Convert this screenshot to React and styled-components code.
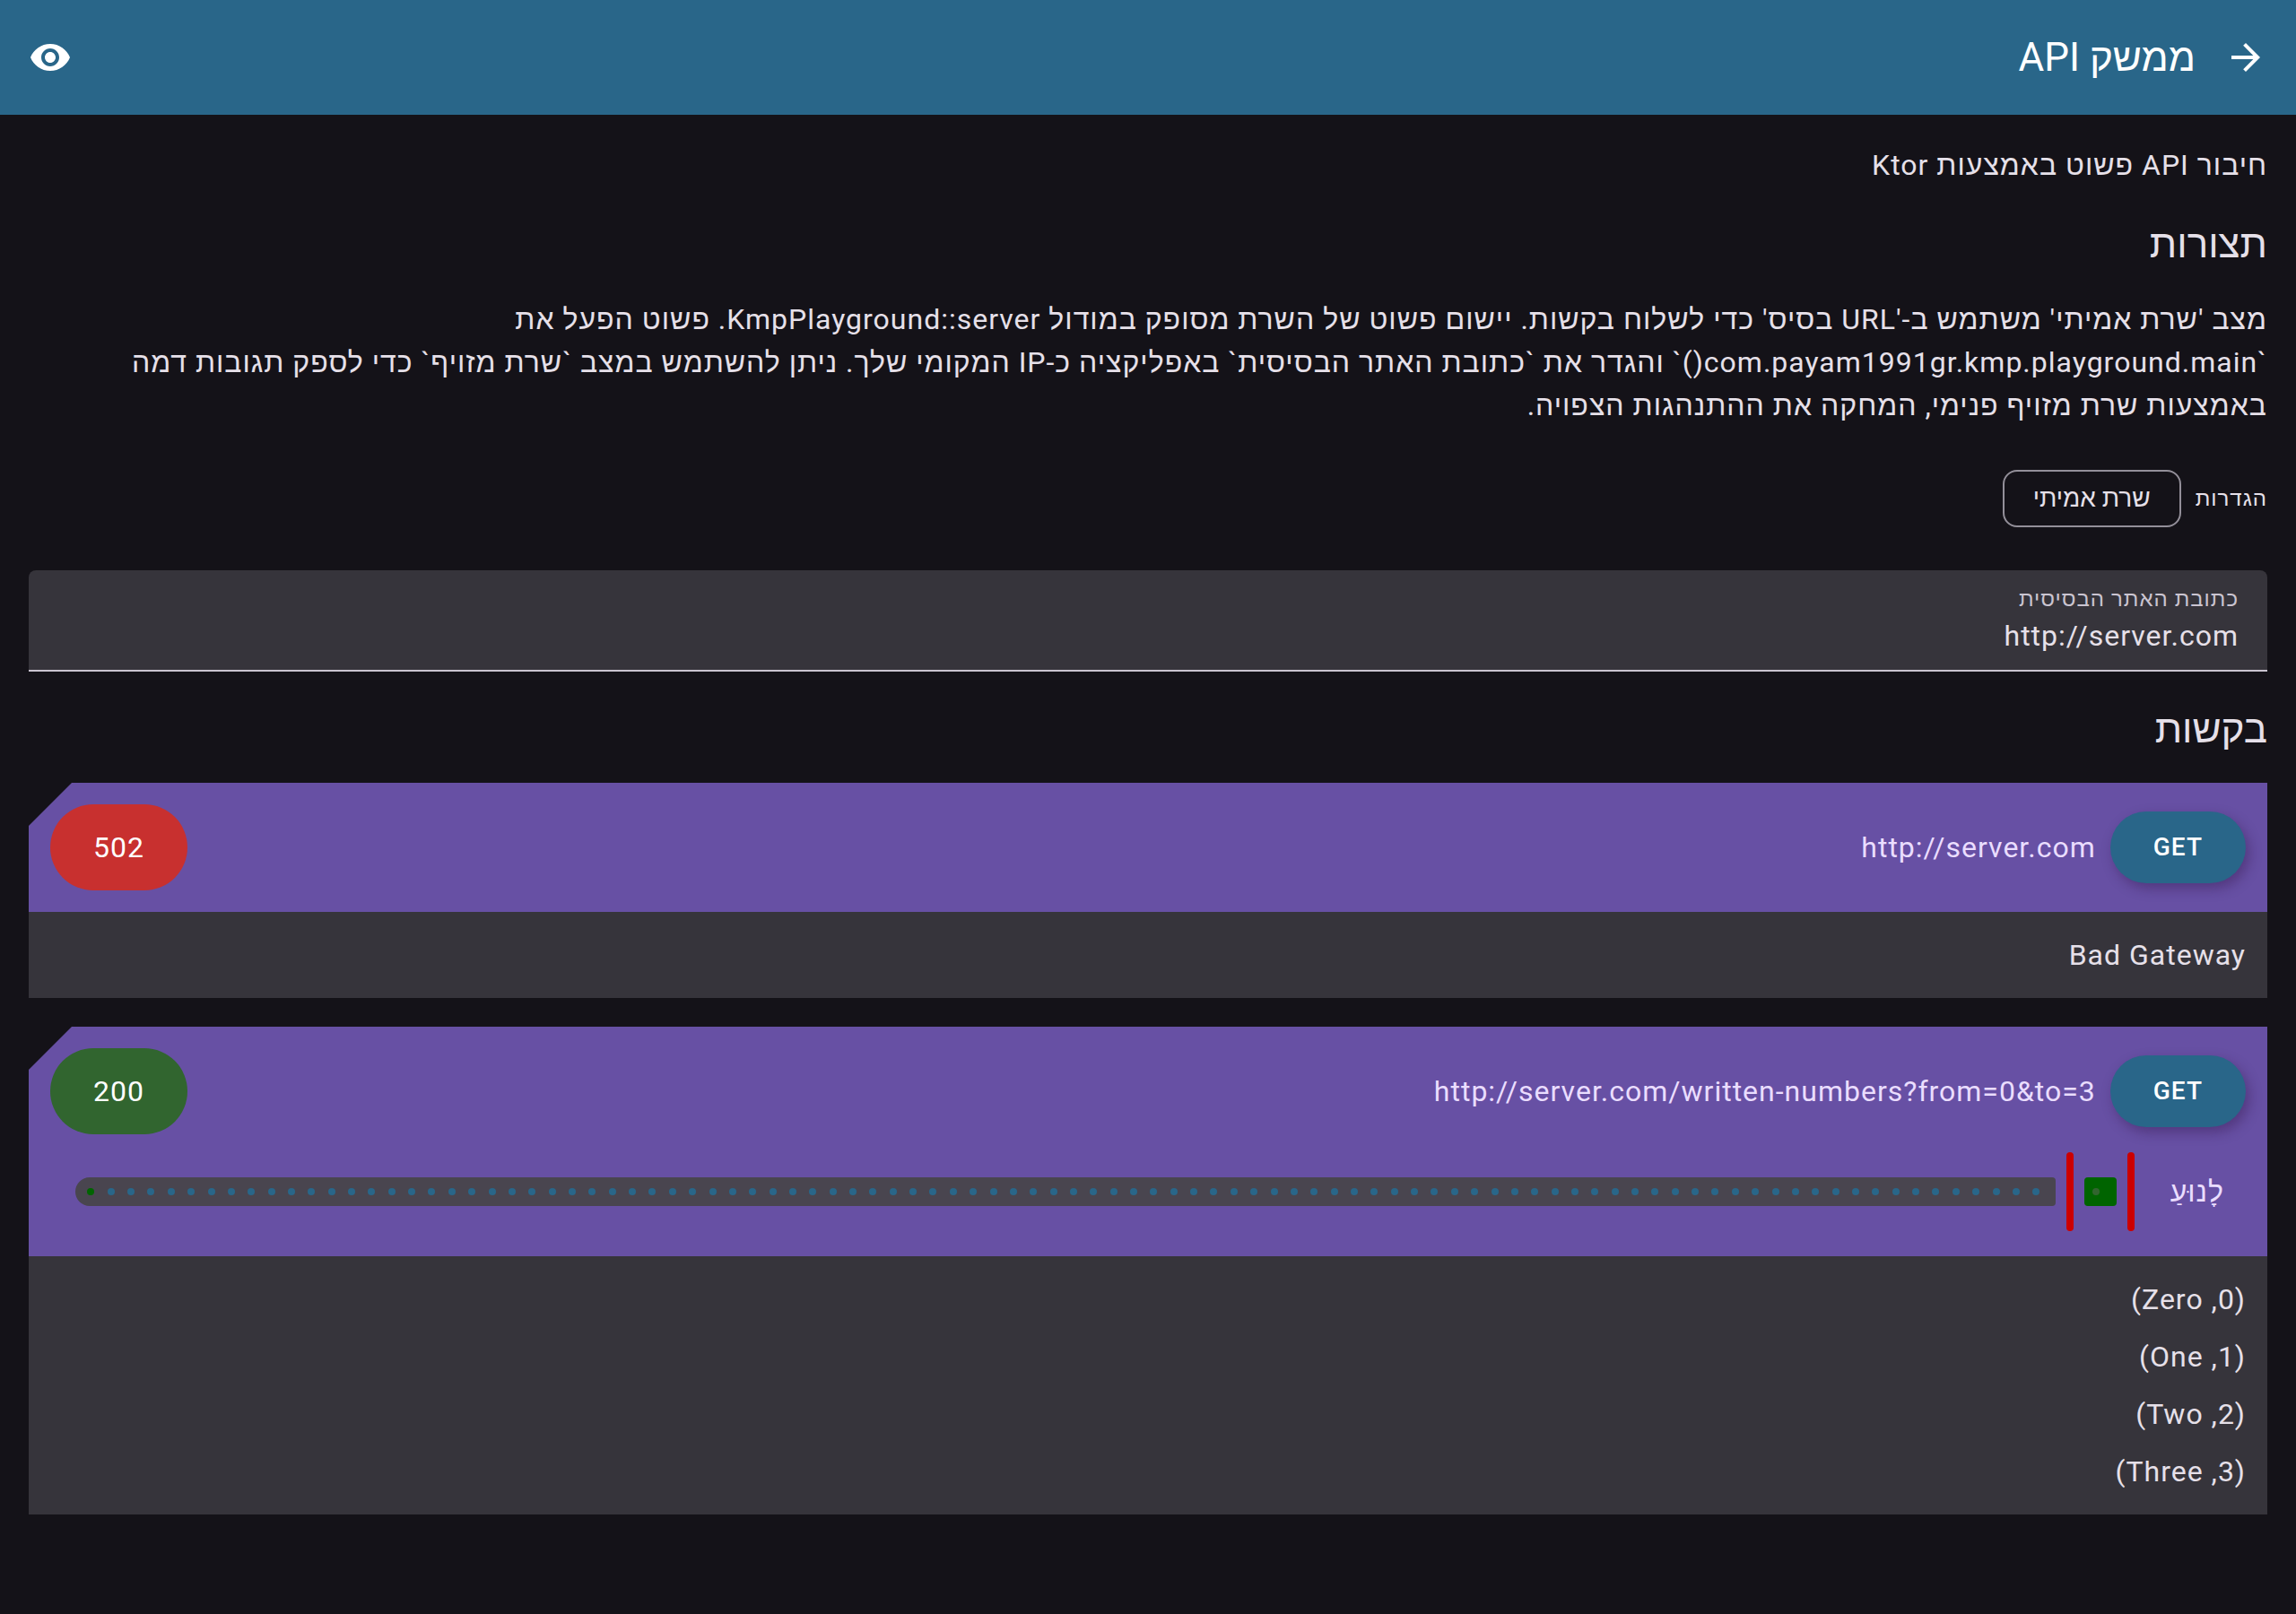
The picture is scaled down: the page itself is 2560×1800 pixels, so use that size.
import React, { useState } from "react";
import styled, { createGlobalStyle } from "styled-components";
import { MdArrowForward, MdVisibility } from "react-icons/md";

const color = {
  primary: "#296689",
  background: "#141218",
  surface: "#36343b",
  onSurface: "#e6e0e9",
  onSurfaceVariant: "#cac4d0",
  outline: "#938f99",
  header: "#6750a4",
  onHeader: "#eaddff",
  success: "#31652f",
  error: "#c8302f",
  thumb: "#cc0000",
  active: "#006400",
  track: "#49454f",
};

const GlobalStyle = createGlobalStyle`
  *, *::before, *::after { box-sizing: border-box; }
  body {
    margin: 0;
    background: ${color.background};
    color: ${color.onSurface};
    font-family: Roboto, "Liberation Sans", sans-serif;
    font-size: 32px;
    line-height: 48px;
    letter-spacing: 1px;
  }
  button, input { font-family: inherit; letter-spacing: inherit; }
`;

const Page = styled.div`
  min-height: 100vh;
`;

const TopBar = styled.header`
  display: flex;
  align-items: center;
  gap: 8px;
  height: 128px;
  padding: 0 8px;
  background: ${color.primary};
  color: #fff;
`;

const IconButton = styled.button`
  display: grid;
  place-items: center;
  width: 96px;
  height: 96px;
  padding: 0;
  border: 0;
  border-radius: 50%;
  background: none;
  color: inherit;
  svg { width: 48px; height: 48px; }
`;

const Title = styled.h1`
  flex: 1;
  margin: 0;
  font-size: 44px;
  font-weight: 400;
  line-height: 60px;
  letter-spacing: 0;
`;

const Content = styled.main`
  display: flex;
  flex-direction: column;
  gap: 32px;
  padding: 32px;
`;

const Paragraph = styled.p`
  margin: 0;
`;

const SectionTitle = styled.h2`
  margin: 0;
  padding-top: 4px;
  font-size: 44px;
  font-weight: 400;
  line-height: 56px;
  letter-spacing: 0;
`;

const SettingsRow = styled.div`
  display: flex;
  align-items: center;
  gap: 16px;
  height: 96px;
`;

const SettingsLabel = styled.span`
  font-size: 24px;
  line-height: 32px;
`;

const Chip = styled.button`
  height: 64px;
  padding: 0 32px;
  border: 2px solid ${color.outline};
  border-radius: 16px;
  background: none;
  color: ${color.onSurface};
  font-size: 28px;
  line-height: 40px;
  letter-spacing: 0;
`;

const Field = styled.label`
  display: flex;
  flex-direction: column;
  padding: 16px 32px 14px;
  border-bottom: 2px solid ${color.onSurfaceVariant};
  border-radius: 8px 8px 0 0;
  background: ${color.surface};
`;

const FieldLabel = styled.span`
  color: ${color.onSurfaceVariant};
  font-size: 24px;
  line-height: 33px;
`;

const FieldInput = styled.input`
  width: 100%;
  height: 48px;
  padding: 0;
  border: 0;
  outline: 0;
  background: none;
  color: ${color.onSurface};
  font-size: 32px;
  line-height: 48px;
`;

const Card = styled.article`
  display: flex;
  flex-direction: column;
`;

const CardHeader = styled.div`
  display: flex;
  flex-direction: column;
  gap: 16px;
  padding: 24px;
  background: ${color.header};
  color: ${color.onHeader};
  clip-path: polygon(48px 0, 100% 0, 100% 100%, 0 100%, 0 48px);
`;

const RequestRow = styled.div`
  display: flex;
  align-items: center;
  gap: 16px;
`;

const MethodButton = styled.button`
  height: 80px;
  padding: 0 48px;
  border: 0;
  border-radius: 40px;
  background: ${color.primary};
  box-shadow: 4px 6px 14px rgba(50, 20, 70, 0.4);
  color: #fff;
  font-size: 28px;
  font-weight: 500;
  line-height: 40px;
`;

const Url = styled.span`
  flex: 1;
`;

const Status = styled.span`
  padding: 24px 48px;
  border-radius: 48px;
  background: ${(p) => (p.$ok ? color.success : color.error)};
  color: #fff;
`;

const SliderRow = styled.div`
  display: flex;
  align-items: center;
  gap: 40px;
  height: 96px;
  padding: 0 24px;
`;

const SliderBox = styled.div`
  display: grid;
  flex: 1;
  align-items: center;
  height: 88px;
  > * { grid-area: 1 / 1; min-width: 0; }
`;

const Track = styled.div`
  display: flex;
  gap: 16px;
  height: 32px;
  padding: 0 4px;
`;

const ActiveTrack = styled.div`
  margin: 0 16px;
  border-radius: 4px;
  background: ${color.active};
`;

const InactiveTrack = styled.div`
  flex: 1;
  border-radius: 16px 4px 4px 16px;
  background: ${color.track};
`;

const Ticks = styled.div`
  display: flex;
  justify-content: space-between;
  padding: 0 16px;
`;

const tickColors = {
  idle: color.primary,
  active: "#32652f",
  end: color.active,
  hidden: "transparent",
};

const Tick = styled.i`
  width: 8px;
  height: 8px;
  border-radius: 50%;
  background: ${(p) => tickColors[p.$kind]};
`;

const Range = styled.input`
  appearance: none;
  width: 100%;
  height: 88px;
  margin: 0;
  background: none;
  pointer-events: none;
  &::-webkit-slider-thumb {
    appearance: none;
    width: 8px;
    height: 88px;
    border-radius: 4px;
    background: ${color.thumb};
    pointer-events: auto;
  }
`;

const CardBody = styled.div`
  display: flex;
  flex-direction: column;
  gap: 16px;
  padding: 24px;
  background: ${color.surface};
`;

const MAX = 101;

function tickKind(i, from, to) {
  if (i === MAX) return "end";
  if (i > from && i < to - 1) return "active";
  if (i > to) return "idle";
  return "hidden";
}

function RangeSlider({ label, range, onChange }) {
  const [from, to] = range;
  const active = { width: `calc(100% * ${(to - from) / MAX} - 32px)` };
  return (
    <SliderRow>
      <span>{label}</span>
      <SliderBox>
        <Track>
          <ActiveTrack style={active} />
          <InactiveTrack />
        </Track>
        <Ticks>
          {Array.from({ length: MAX + 1 }, (_, i) => (
            <Tick key={i} $kind={tickKind(i, from, to)} />
          ))}
        </Ticks>
        <Range
          type="range"
          min="0"
          max={MAX}
          value={from}
          aria-label={`${label} 1`}
          onChange={(e) => onChange([Math.min(+e.target.value, to), to])}
        />
        <Range
          type="range"
          min="0"
          max={MAX}
          value={to}
          aria-label={`${label} 2`}
          onChange={(e) => onChange([from, Math.max(+e.target.value, from)])}
        />
      </SliderBox>
    </SliderRow>
  );
}

function RequestCard({ url, status, lines, children }) {
  return (
    <Card>
      <CardHeader>
        <RequestRow>
          <MethodButton type="button">GET</MethodButton>
          <Url>{url}</Url>
          <Status $ok={status === 200}>{status}</Status>
        </RequestRow>
        {children}
      </CardHeader>
      <CardBody>
        {lines.map((line) => (
          <Paragraph key={line}>{line}</Paragraph>
        ))}
      </CardBody>
    </Card>
  );
}

export default function App() {
  const [baseUrl, setBaseUrl] = useState("http://server.com");
  const [range, setRange] = useState([0, 3]);

  return (
    <Page dir="rtl" lang="he">
      <GlobalStyle />
      <TopBar>
        <IconButton type="button" aria-label="חזרה">
          <MdArrowForward />
        </IconButton>
        <Title>ממשק API</Title>
        <IconButton type="button" aria-label="תצוגה">
          <MdVisibility />
        </IconButton>
      </TopBar>
      <Content>
        <Paragraph>חיבור API פשוט באמצעות Ktor</Paragraph>
        <SectionTitle>תצורות</SectionTitle>
        <Paragraph>
          מצב 'שרת אמיתי' משתמש ב-'URL בסיס' כדי לשלוח בקשות. יישום פשוט של השרת
          מסופק במודול KmpPlayground::server. פשוט הפעל את
          `com.payam1991gr.kmp.playground.main()` והגדר את `כתובת האתר הבסיסית`
          באפליקציה כ-IP המקומי שלך. ניתן להשתמש במצב `שרת מזויף` כדי לספק תגובות
          דמה באמצעות שרת מזויף פנימי, המחקה את ההתנהגות הצפויה.
        </Paragraph>
        <SettingsRow>
          <SettingsLabel id="settings">הגדרות</SettingsLabel>
          <Chip type="button" aria-describedby="settings">
            שרת אמיתי
          </Chip>
        </SettingsRow>
        <Field>
          <FieldLabel>כתובת האתר הבסיסית</FieldLabel>
          <FieldInput
            type="text"
            value={baseUrl}
            onChange={(e) => setBaseUrl(e.target.value)}
          />
        </Field>
        <SectionTitle>בקשות</SectionTitle>
        <RequestCard url={baseUrl} status={502} lines={["Bad Gateway"]} />
        <RequestCard
          url={`${baseUrl}/written-numbers?from=${range[0]}&to=${range[1]}`}
          status={200}
          lines={["(0, Zero)", "(1, One)", "(2, Two)", "(3, Three)"]}
        >
          <RangeSlider label="לָנוּעַ" range={range} onChange={setRange} />
        </RequestCard>
      </Content>
    </Page>
  );
}
